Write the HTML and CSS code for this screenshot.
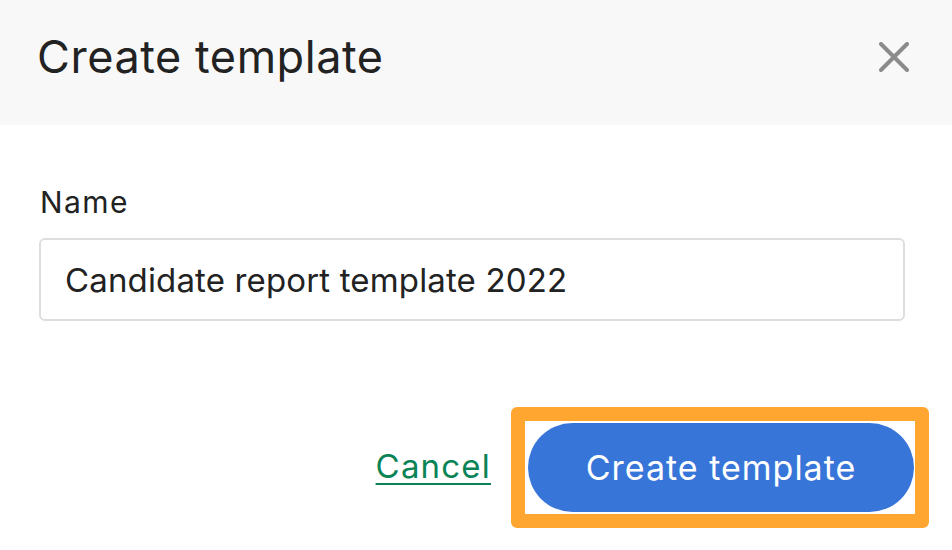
FILE: index.html
```html
<!DOCTYPE html>
<html lang="en">
<head>
<meta charset="utf-8">
<title>Create template</title>
<link rel="stylesheet" href="styles.css">
</head>
<body>
<div class="modal">
  <header class="modal-header">
    <h1 class="modal-title">Create template</h1>
    <button class="close" aria-label="Close">
      <svg viewBox="0 0 30 30" width="30" height="30"><path d="M2 2 L28 28 M28 2 L2 28" stroke="#8b8b8b" stroke-width="4" stroke-linecap="round" fill="none"/></svg>
    </button>
  </header>
  <main class="modal-body">
    <label class="field-label" for="name">Name</label>
    <input id="name" class="field-input" type="text" value="Candidate report template 2022">
    <div class="actions">
      <a class="cancel" href="#">Cancel</a>
      <div class="highlight">
        <button class="primary">Create template</button>
      </div>
    </div>
  </main>
</div>
</body>
</html>
```

FILE: styles.css
```css
* { box-sizing: border-box; }
html, body { margin: 0; padding: 0; background: #ffffff; }
body { font-family: Inter, "Liberation Sans", sans-serif; color: #222222; width: 952px; height: 550px; overflow: hidden; }

.modal-header {
  background: #f8f8f8;
  height: 125px;
  display: flex;
  justify-content: space-between;
  align-items: flex-start;
  padding: 29px 43px 0 37px;
}
.modal-title {
  margin: 0;
  font-size: 45px;
  line-height: 56px;
  font-weight: 400;
  color: #222222;
  letter-spacing: 0.55px;
}
.close {
  margin-top: 13px;
  padding: 0;
  border: 0;
  background: transparent;
  width: 30px;
  height: 30px;
  display: block;
}
.close svg { display: block; }

.modal-body {
  padding: 59px 48px 0 39px;
  display: flex;
  flex-direction: column;
}
.field-label {
  font-size: 30px;
  line-height: 36px;
  color: #222222;
  padding-left: 1px;
  letter-spacing: 1.4px;
}
.field-input {
  margin-top: 18px;
  width: 866px;
  height: 83px;
  border: 2px solid #dedede;
  border-radius: 6px;
  padding: 0 0 0 24px;
  font-family: Inter, "Liberation Sans", sans-serif;
  font-size: 33px;
  letter-spacing: 0.15px;
  color: #222222;
  background: #ffffff;
  outline: none;
}
.actions {
  margin-top: 86px;
  margin-right: -25px;
  display: flex;
  justify-content: flex-end;
  align-items: center;
  gap: 20px;
}
.cancel {
  font-size: 33px;
  line-height: 40px;
  letter-spacing: 1.2px;
  color: #0a8456;
  text-decoration: underline;
  text-decoration-thickness: 2px;
  text-underline-offset: 5px;
  margin-top: -4px;
}
.highlight {
  border: 14px solid #ffa630;
  border-radius: 6px;
  padding: 2px 1px 2px 3px;
  background: #ffffff;
}
.primary {
  display: block;
  width: 386px;
  height: 89px;
  border: 0;
  border-radius: 45px;
  background: #3875d9;
  color: #ffffff;
  font-family: Inter, "Liberation Sans", sans-serif;
  font-size: 34px;
  letter-spacing: 1px;
  padding: 0;
}
```
